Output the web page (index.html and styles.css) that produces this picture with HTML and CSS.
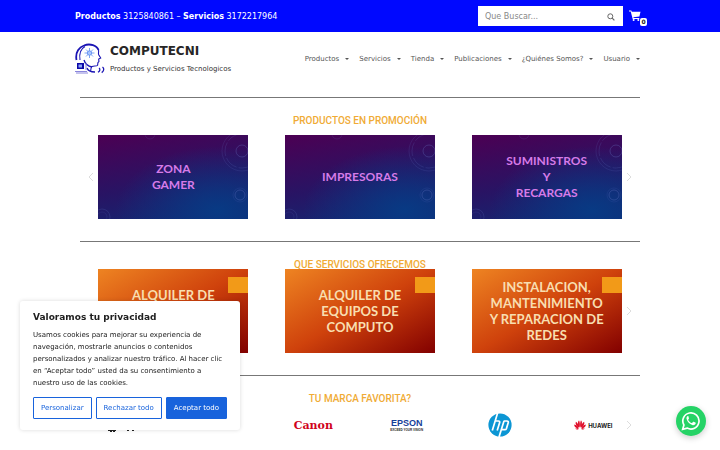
FILE: index.html
```html
<!DOCTYPE html>
<html lang="es">
<head>
  <meta charset="UTF-8">
  <meta name="viewport" content="width=device-width, initial-scale=1.0">
  <title>COMPUTECNI - Productos y Servicios Tecnologicos</title>
  <link rel="stylesheet" href="styles.css">
</head>
<body>
  <svg class="defs" aria-hidden="true">
    <symbol id="circulos" viewBox="0 0 150 84">
      <g fill="none" stroke="#6a78c8" stroke-opacity=".3">
        <circle cx="144" cy="16" r="6"/>
        <circle cx="144" cy="16" r="17" stroke-dasharray="14 2" stroke-width=".6"/>
        <circle cx="144" cy="16" r="20" stroke-width=".5"/>
        <circle cx="142" cy="60" r="5"/>
        <circle cx="142" cy="60" r="7" stroke-width=".4"/>
        <circle cx="4" cy="82" r="8" stroke-width=".6"/>
        <circle cx="4" cy="82" r="5" stroke-width=".4"/>
        <circle cx="52" cy="-1" r="5" stroke-width=".5"/>
      </g>
    </symbol>
  </svg>

  <div class="topbar">
    <div class="contenedor">
      <p class="telefonos"><strong>Productos</strong> 3125840861 – <strong>Servicios</strong> 3172217964</p>
      <div class="acciones">
        <form class="buscador">
          <input type="search" placeholder="Que Buscar..." aria-label="Que Buscar">
          <button type="button" aria-label="Buscar">
            <svg viewBox="0 0 8 8" width="8" height="8"><circle cx="3.3" cy="3.3" r="2.5" fill="none" stroke="#666" stroke-width="1"/><path d="M5.2 5.2L7.4 7.4" stroke="#666" stroke-width="1.2"/></svg>
          </button>
        </form>
        <a class="carrito" href="#" aria-label="Carrito">
          <svg viewBox="0 0 12 11" width="12" height="11"><path fill="#fff" d="M0 .5h2.3l.5 1.3h8.7L10.4 6.6l-6 .6.2.8h5.7v1H3.7L1.7 1.6H0z"/><circle cx="4.6" cy="9.9" r="1" fill="#fff"/><circle cx="9.3" cy="9.9" r="1" fill="#fff"/></svg>
          <span class="cantidad">0</span>
        </a>
      </div>
    </div>
  </div>

  <header>
    <div class="contenedor">
      <a class="marca" href="#">
        <svg viewBox="0 0 30 31" width="30" height="31">
          <g fill="none" stroke="#1a14b4">
            <path stroke-width="1.8" d="M1.5 17C0 9 4.500 4 9 2.500c6-2.500 13 0 14.500 4.500"/>
            <path stroke-width="1.1" d="M5 17C4 11 5.500 6 10 3.500M23.500 7c.5 2-.5 3 .2 4.800l2 3.200-2 1 .2 2.500-1 1.200-.3 2.500c-1 1.600-3.600.3-5.600 1.300-1.500 1-.8 3.500-1.500 4.500"/>
            <path stroke-width="1.300" d="M9 17c1 3.500 3.500 6 8 7M12 25c1 3 4 4 8 4"/>
            <path stroke-width="1.300" d="M24 25c1.500 1 1 3-1 4.300M27.500 24c2 1.500 1.500 4-.8 5.600"/>
          </g>
          <g stroke="#5a8cf0" fill="#a8c6ff" stroke-width=".8">
            <path d="M14.500 5v10M9.500 10h10M11 6.500l7 7M18 6.500l-7 7"/>
            <circle cx="14.500" cy="10" r="2.200"/>
          </g>
          <path fill="#0c08a8" d="M2 20h7v6H2z"/>
          <path fill="#8da4f4" d="M3.500 21.500h3.500v3H3.500z"/>
          <path fill="none" stroke="#8a86dc" d="M0 28.500h12M1 30h12M11 20v7"/>
        </svg>
        <span class="nombre">
          <strong>COMPUTECNI</strong>
          <small>Productos y Servicios Tecnologicos</small>
        </span>
      </a>
      <nav>
        <a href="#">Productos</a>
        <a href="#">Servicios</a>
        <a href="#">Tienda</a>
        <a href="#">Publicaciones</a>
        <a href="#">¿Quiénes Somos?</a>
        <a href="#">Usuario</a>
      </nav>
    </div>
  </header>

  <main>
    <section>
      <h2>PRODUCTOS EN PROMOCIÓN</h2>
      <div class="carrusel promocion">
        <a class="lamina morada" href="#"><svg><use href="#circulos"/></svg><span>ZONA<br>GAMER</span></a>
        <a class="lamina morada" href="#"><svg><use href="#circulos"/></svg><span>IMPRESORAS</span></a>
        <a class="lamina morada" href="#"><svg><use href="#circulos"/></svg><span>SUMINISTROS<br>Y<br>RECARGAS</span></a>
        <button class="flecha anterior" aria-label="Anterior"><svg viewBox="0 0 6 10" width="6" height="10"><path d="M5 1L1 5l4 4"/></svg></button>
        <button class="flecha siguiente" aria-label="Siguiente"><svg viewBox="0 0 6 10" width="6" height="10"><path d="M1 1l4 4-4 4"/></svg></button>
      </div>
    </section>

    <section>
      <h2>QUE SERVICIOS OFRECEMOS</h2>
      <div class="carrusel servicios">
        <a class="lamina naranja" href="#"><span>ALQUILER DE<br>EQUIPOS DE<br>COMPUTO</span></a>
        <a class="lamina naranja" href="#"><span>ALQUILER DE<br>EQUIPOS DE<br>COMPUTO</span></a>
        <a class="lamina naranja" href="#"><span>INSTALACION,<br>MANTENIMIENTO<br>Y REPARACION DE<br>REDES</span></a>
        <button class="flecha siguiente" aria-label="Siguiente"><svg viewBox="0 0 6 10" width="6" height="10"><path d="M1 1l4 4-4 4"/></svg></button>
      </div>
    </section>

    <section>
      <h2>TU MARCA FAVORITA?</h2>
      <div class="marcas">
        <svg viewBox="0 0 40 16" width="40" height="16"><path fill="#222" d="M1 13h8v1H1zM3 14h2v1H3zM6 14h2v1H6zM20 13h2v1h-2zM25 13h2v1h-2z"/></svg>
        <span></span>
        <span class="canon">Canon</span>
        <span class="epson">EPSON<small>EXCEED YOUR VISION</small></span>
        <svg viewBox="0 0 24 24" width="24" height="24">
          <circle cx="12" cy="12" r="11.600" fill="#0c96d4"/>
          <path fill="none" stroke="#fff" stroke-width="1.700" d="M9.600 0L4.300 17.500M7.300 8h3.100c1.200 0 1.500.8 1.200 1.800L9.200 17.500M16 8l-5 16M15.700 8h3.200c1.300 0 1.600.8 1.300 1.800l-1.800 5.800c-.3.800-.8 1.100-1.600 1.100h-3"/>
        </svg>
        <span class="huawei">
          <svg viewBox="0 0 12 10" width="12" height="10"><g fill="#e0102c"><path d="M5.700 7.500C3.500 4.500 3.600 1 5.100.4c.9 1.500 1 4.500.6 7.100zM6.300 7.500C8.500 4.500 8.400 1 6.900.4 6 1.900 5.900 4.900 6.300 7.500zM5.200 7.800C2.200 6 .9 3.600 1.900 1.800 3.700 2.700 5 5.300 5.200 7.800zM6.800 7.800c3-1.800 4.300-4.200 3.300-6C8.300 2.700 7 5.300 6.800 7.800zM4.900 8.400C2.200 8.400.1 6.500.2 4.400 2.300 4.900 4.200 6.600 4.900 8.400zM7.100 8.400c2.700 0 4.800-1.900 4.700-4C9.700 4.900 7.800 6.600 7.100 8.400zM4.700 8.900c-1.100.9-2.700.8-3.500-.3 1.100-.3 2.400-.2 3.500.3zM7.300 8.900c1.100.9 2.700.8 3.500-.3-1.100-.3-2.400-.2-3.500.3z"/></g></svg>
          HUAWEI
        </span>
        <button class="flecha siguiente" aria-label="Siguiente"><svg viewBox="0 0 6 10" width="6" height="10"><path d="M1 1l4 4-4 4"/></svg></button>
      </div>
    </section>
  </main>

  <div class="cookies" role="dialog" aria-labelledby="cookies-titulo">
    <h3 id="cookies-titulo">Valoramos tu privacidad</h3>
    <p>Usamos cookies para mejorar su experiencia de navegación, mostrarle anuncios o contenidos personalizados y analizar nuestro tráfico. Al hacer clic en “Aceptar todo” usted da su consentimiento a nuestro uso de las cookies.</p>
    <div class="botones">
      <button>Personalizar</button>
      <button>Rechazar todo</button>
      <button class="aceptar">Aceptar todo</button>
    </div>
  </div>

  <a class="whatsapp" href="#" aria-label="WhatsApp">
    <svg viewBox="0 0 20 20" width="20" height="20"><path fill="none" stroke="#fff" stroke-width="1.700" d="M1.700 18.300l1.200-4.300a8.100 8.100 0 1 1 3.200 3.100z"/><path fill="#fff" d="M7.500 5.500c-.3-.6-.9-.5-1.300 0-.6.600-.9 1.500-.6 2.500.9 3.200 3.300 5.400 6.200 6.200 1.200.2 2.400-.4 2.800-1.400.2-.6.200-1-.2-1.200l-1.800-.9c-.3-.1-.5 0-.7.200l-.8 1c-.2.200-.4.200-.7.100-1.400-.6-2.500-1.600-3.200-2.900-.1-.3 0-.4.100-.6l.6-.7c.1-.2.100-.4 0-.6z"/></svg>
  </a>
</body>
</html>
```
FILE: styles.css
```css
* { box-sizing: border-box; }
body {
  margin: 0;
  font-family: 'DejaVu Sans', sans-serif;
  font-size: 7px;
  color: #333;
  background: white;
  overflow: hidden;
}
a { color: inherit; text-decoration: none; }
button { font-family: inherit; cursor: pointer; }
.defs { display: none; }
.contenedor {
  max-width: 570px;
  margin: 0 auto;
  display: flex;
  justify-content: space-between;
  align-items: center;
}

/* barra superior */
.topbar { background: #0008ff; color: white; }
.topbar .contenedor { height: 32px; }
.telefonos { margin: 0; font-size: 8px; }
.acciones { display: flex; align-items: center; gap: 6px; }
.buscador {
  display: flex;
  width: 145px;
  height: 20px;
  background: white;
}
.buscador input {
  flex: 1;
  min-width: 0;
  padding: 0 7px;
  border: none;
  background: none;
  font-family: inherit;
  font-size: 8px;
}
.buscador input::placeholder { color: #888; }
.buscador button {
  width: 24px;
  padding: 0;
  border: none;
  background: none;
}
.carrito { position: relative; width: 16px; height: 12px; }
.cantidad {
  position: absolute;
  right: -2px;
  bottom: -4px;
  width: 7px;
  line-height: 8px;
  border-radius: 2px;
  background: white;
  color: #222;
  font-size: 6px;
  font-weight: bold;
  text-align: center;
}

/* encabezado */
header .contenedor { height: 53px; }
.marca { display: flex; align-items: center; gap: 5px; }
.nombre { display: flex; flex-direction: column; gap: 6px; }
.nombre strong { font-size: 12px; line-height: 15px; color: #272626; }
.nombre small { font-size: 7px; line-height: 9px; }
nav { display: flex; gap: 10px; padding-right: 5px; }
nav a { display: flex; align-items: center; gap: 6px; color: #555; }
nav a::after {
  content: "";
  border: 2px solid transparent;
  border-top-color: #555;
  border-bottom: none;
}

main { max-width: 560px; margin: 12px auto 0; }
section { border-top: 1px solid #777; padding: 17px 0 22px; }
h2 {
  margin: 0;
  font-family: Roboto, sans-serif;
  font-size: 10px;
  line-height: 12px;
  font-weight: 500;
  text-align: center;
  color: #f0ab35;
}

/* carruseles */
.carrusel {
  position: relative;
  display: grid;
  grid-template-columns: repeat(3, 1fr);
  justify-items: center;
}
.promocion { margin-top: 8px; }
.servicios { margin-top: -2px; }
.lamina {
  position: relative;
  display: flex;
  align-items: center;
  justify-content: center;
  width: 150px;
  height: 84px;
  font-family: Lato, sans-serif;
  font-size: 13px;
  line-height: 16px;
  font-weight: bold;
  text-align: center;
}
.lamina svg { position: absolute; inset: 0; width: 100%; height: 100%; }
.lamina span { position: relative; }
.morada {
  font-size: 12px;
  color: #d67be8;
  background: radial-gradient(at 80% 90%, #083a84, transparent 60%), linear-gradient(170deg, #4c0053, #281464 55%, #102a74);
}
.naranja {
  color: #f8deb0;
  background: linear-gradient(150deg, #ee8422, #cf420c 50%, #820000);
}
.naranja::after {
  content: "";
  position: absolute;
  top: 8px;
  right: 0;
  width: 20px;
  height: 16px;
  background: #f29a18;
}
.flecha {
  position: absolute;
  top: 50%;
  transform: translateY(-50%);
  width: 10px;
  height: 14px;
  padding: 0;
  border: none;
  background: none;
}
.flecha path { fill: none; stroke: #ddd; }
.anterior { left: 6px; }
.siguiente { right: 6px; }

/* marcas */
.marcas {
  position: relative;
  display: grid;
  grid-template-columns: repeat(6, 1fr);
  justify-items: center;
  align-items: center;
  margin-top: 8px;
}
.canon {
  font-family: 'DejaVu Serif', serif;
  font-size: 11px;
  font-weight: bold;
  color: #d0021b;
}
.epson {
  font-family: 'Liberation Sans', sans-serif;
  font-size: 9px;
  line-height: 10px;
  font-weight: bold;
  color: #16409a;
  text-align: center;
}
.epson small { display: block; font-size: 3px; line-height: 4px; color: #222; }
.huawei {
  display: flex;
  align-items: center;
  gap: 2px;
  font-family: Inter, sans-serif;
  font-size: 6px;
  font-weight: bold;
  color: #222;
}

/* aviso de cookies */
.cookies {
  position: fixed;
  left: 20px;
  bottom: 20px;
  width: 220px;
  padding: 10px 13px 11px;
  border-radius: 3px;
  background: white;
  box-shadow: 0 0 4px rgba(0,0,0,0.15);
}
.cookies h3 { margin: 0; font-size: 9px; line-height: 12px; color: #212121; }
.cookies p { margin: 6px 0 8px; line-height: 12px; color: #212121; }
.botones { display: flex; gap: 4px; }
.botones button {
  flex: auto;
  height: 22px;
  padding: 0 6px;
  border: 1px solid #1863dc;
  border-radius: 1px;
  background: white;
  color: #1863dc;
  font-size: 7px;
  white-space: nowrap;
}
.botones .aceptar { background: #1863dc; color: white; }

.whatsapp {
  position: fixed;
  right: 14px;
  bottom: 14px;
  display: flex;
  align-items: center;
  justify-content: center;
  width: 30px;
  height: 30px;
  border-radius: 50%;
  background: #25d366;
  box-shadow: 0 2px 6px rgba(0,0,0,0.2);
}
```
